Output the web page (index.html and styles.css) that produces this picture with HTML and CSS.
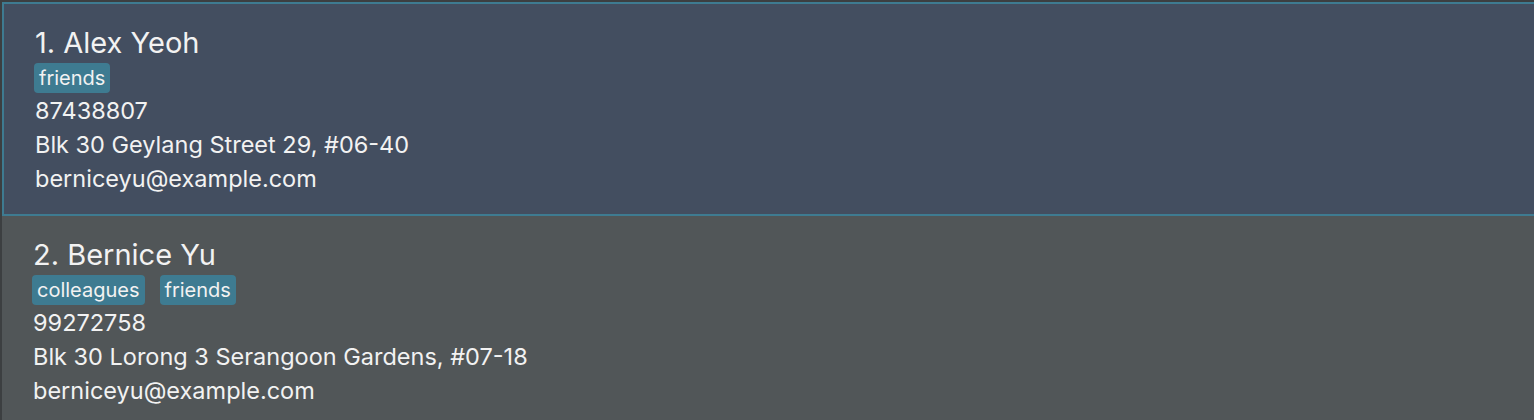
FILE: index.html
```html
<!DOCTYPE html>
<html>
<head>
<meta charset="utf-8">
<link rel="stylesheet" href="styles.css">
</head>
<body>
<div class="list">
  <div class="cell selected">
    <div class="name">1. Alex Yeoh</div>
    <div class="tags"><span class="tag">friends</span></div>
    <div class="line">87438807</div>
    <div class="line">Blk 30 Geylang Street 29, #06-40</div>
    <div class="line">berniceyu@example.com</div>
  </div>
  <div class="cell">
    <div class="name">2. Bernice Yu</div>
    <div class="tags"><span class="tag">colleagues</span><span class="tag">friends</span></div>
    <div class="line">99272758</div>
    <div class="line">Blk 30 Lorong 3 Serangoon Gardens, #07-18</div>
    <div class="line">berniceyu@example.com</div>
  </div>
</div>
</body>
</html>
```
FILE: styles.css
```css
html, body {
  margin: 0;
  padding: 0;
  height: 100%;
  background: #3c3f41;
  overflow: hidden;
}
.list {
  padding: 2px 0 0 2px;
  font-family: Inter, "Noto Sans", sans-serif;
  color: #f2f2f2;
}
.cell {
  background: #515658;
  padding: 22px 0 18px 31px;
}
.cell.selected {
  background: #434e60;
  border: 2px solid #3e7b91;
  border-right: none;
}
.name {
  font-size: 29px;
  line-height: 34px;
}
.tags {
  display: flex;
  gap: 15px;
  margin-top: 3px;
  margin-left: -1px;
}
.tag {
  background: #3e7b91;
  border-radius: 4px;
  font-size: 20px;
  line-height: 30px;
  padding: 0 5px;
}
.line {
  font-size: 23.5px;
  line-height: 34px;
}
.tags + .line {
  margin-top: 1px;
}
```
